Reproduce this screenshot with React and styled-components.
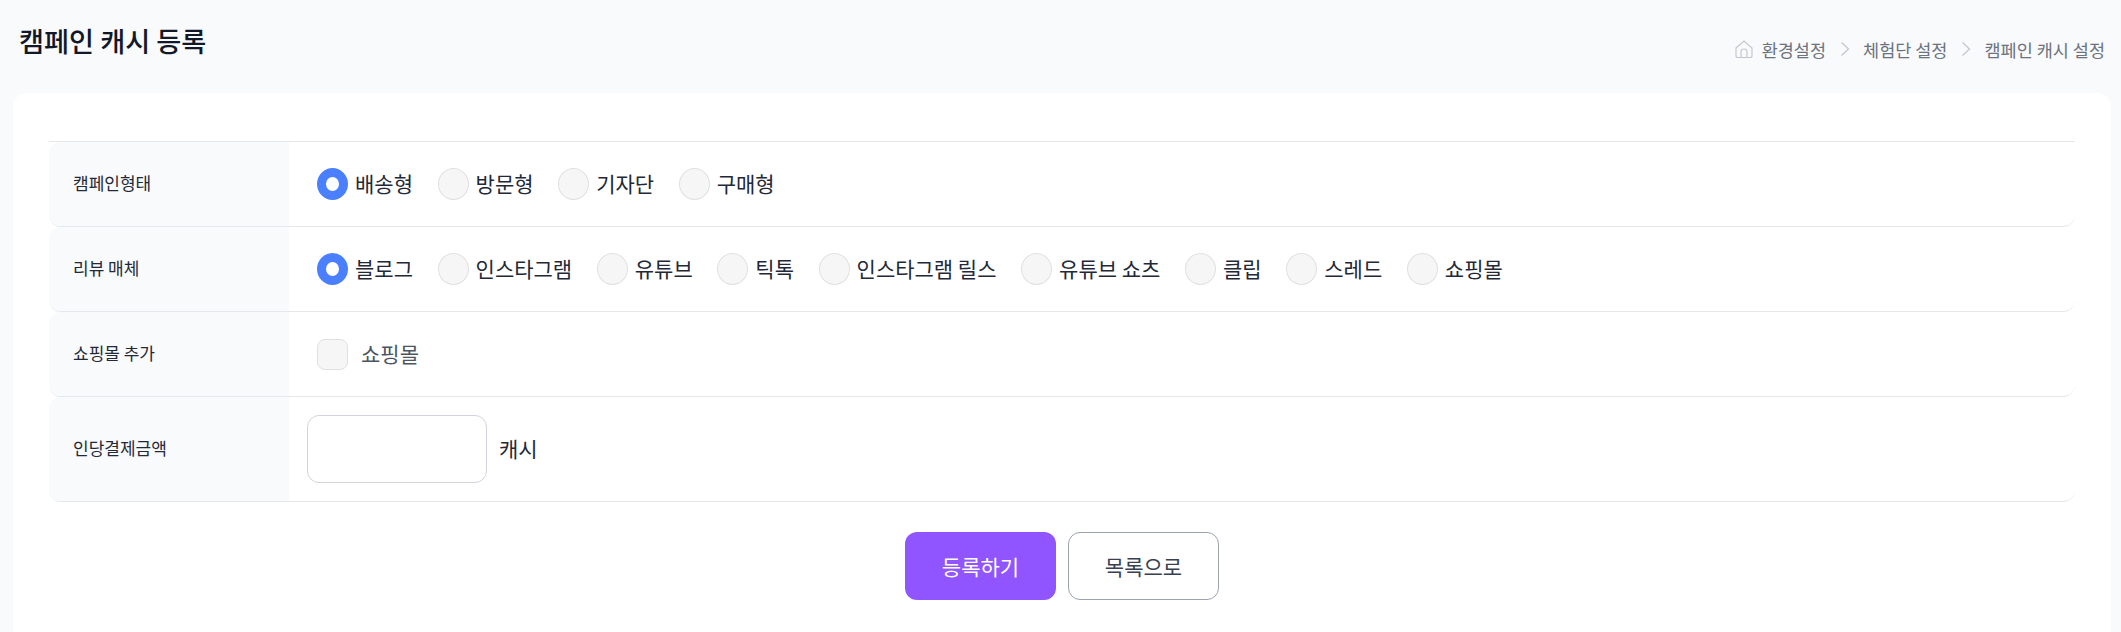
import React from "react";
import styled, { createGlobalStyle } from "styled-components";

const GlobalStyle = createGlobalStyle`
    html, body {
        margin: 0;
        height: 100%;
        overflow: hidden;
        background: #f9fafb;
        font-family: "Noto Sans CJK KR", "Noto Sans", sans-serif;
    }
    * {
        box-sizing: border-box;
    }
`

const Page = styled.div`
    height: 632px;
    display: flex;
    flex-direction: column;
`

const Header = styled.header`
    height: 93px;
    flex: none;
    display: flex;
    justify-content: space-between;
    padding: 0 16px 0 19px;
`

const Title = styled.h1`
    margin: 21px 0 0;
    font-size: 27.2px;
    line-height: 38px;
    font-weight: 500;
    color: #111827;
`

const Breadcrumb = styled.nav`
    display: flex;
    align-items: center;
    height: 24px;
    margin-top: 37px;
    font-size: 17.5px;
    color: #6b7280;
`

const Crumb = styled.span`
    white-space: nowrap;
`

const HomeIcon = styled.svg`
    width: 18px;
    height: 18px;
    margin-right: 9px;
`

const ChevronIcon = styled.svg`
    width: 10px;
    height: 16px;
    margin: 0 13px 0 14px;
`

const Card = styled.main`
    flex: 1;
    margin: 0 10px 0 13px;
    padding: 48px 36px 0;
    background: #fff;
    border-radius: 14px 14px 0 0;
`

const Table = styled.section`
    border-top: 1px solid #e5e7eb;
`

const Row = styled.div`
    display: flex;
    height: ${props => props.$height}px;
    border-bottom: 1px solid #e5e7eb;
    border-radius: 12px;
    overflow: hidden;
`

const RowHead = styled.div`
    width: 240px;
    flex: none;
    display: flex;
    align-items: center;
    padding-bottom: 4px;
    padding-left: 24px;
    background: #f9fafb;
    font-size: 17px;
    color: #1f2937;
`

const RowBody = styled.div`
    flex: 1;
    display: flex;
    align-items: center;
    padding-left: ${props => props.$inset}px;
`

const RadioLabel = styled.label`
    display: flex;
    align-items: center;
    gap: 7px;
    margin-right: 24.6px;
    font-size: 21px;
    line-height: 32px;
    color: #1f2937;
    white-space: nowrap;
`

const OptionText = styled.span`
    padding-bottom: 2px;
`

const Radio = styled.input.attrs({ type: "radio" })`
    appearance: none;
    margin: 0;
    flex: none;
    width: 31px;
    height: 32px;
    border-radius: 50%;
    background: #f6f6f6;
    border: 1px solid #e0e0e0;

    &:checked {
        background: #fff;
        border: 9px solid #4a80ff;
    }
`

const CheckLabel = styled.label`
    display: flex;
    align-items: center;
    gap: 13px;
    font-size: 21px;
    line-height: 32px;
    color: #4b5563;
`

const Check = styled.input.attrs({ type: "checkbox" })`
    appearance: none;
    margin: 0;
    width: 31px;
    height: 31px;
    border-radius: 8px;
    background: #f6f6f6;
    border: 1px solid #e0e0e0;
`

const AmountInput = styled.input`
    width: 180px;
    height: 68px;
    margin-right: 12px;
    border: 1px solid #d1d5db;
    border-radius: 12px;
    background: #fff;
`

const Unit = styled.span`
    font-size: 21px;
    line-height: 32px;
    padding-bottom: 2px;
    color: #1f2937;
`

const Actions = styled.div`
    display: flex;
    justify-content: center;
    gap: 12px;
    margin-top: 30px;
`

const Button = styled.button`
    width: 151px;
    height: 68px;
    border-radius: 12px;
    font-family: inherit;
    font-size: 21px;
    background: ${props => props.$primary ? "#9155ff" : "#fff"};
    color: ${props => props.$primary ? "#fff" : "#374151"};
    border: ${props => props.$primary ? "none" : "1px solid #9ca3af"};
`

const campaignTypes = ["배송형", "방문형", "기자단", "구매형"]
const mediaTypes = ["블로그", "인스타그램", "유튜브", "틱톡", "인스타그램 릴스", "유튜브 쇼츠", "클립", "스레드", "쇼핑몰"]

function RadioGroup ({name, options}) {
    return options.map((option, index) => (
        <RadioLabel key={option}>
            <Radio name={name} defaultChecked={index === 0} />
            <OptionText>{option}</OptionText>
        </RadioLabel>
    ))
}

export default function App () {
    return (
        <Page>
            <GlobalStyle />
            <Header>
                <Title>캠페인 캐시 등록</Title>
                <Breadcrumb>
                    <HomeIcon viewBox="0 0 18 18" fill="none" stroke="#c3c8d0" strokeWidth="1.2">
                        <path d="M1 8 9 1l8 7v8a1.500 1.500 0 0 1-1.500 1.500h-13A1.500 1.500 0 0 1 1 16z" />
                        <path d="M6 17.500V12a3 3 0 0 1 6 0v5.500" />
                    </HomeIcon>
                    <Crumb>환경설정</Crumb>
                    <ChevronIcon viewBox="0 0 10 16" fill="none" stroke="#c3c8d0" strokeWidth="1.3">
                        <path d="m1.500 1.500 7 6.500-7 6.500" />
                    </ChevronIcon>
                    <Crumb>체험단 설정</Crumb>
                    <ChevronIcon viewBox="0 0 10 16" fill="none" stroke="#c3c8d0" strokeWidth="1.3">
                        <path d="m1.500 1.500 7 6.500-7 6.500" />
                    </ChevronIcon>
                    <Crumb>캠페인 캐시 설정</Crumb>
                </Breadcrumb>
            </Header>
            <Card>
                <Table>
                    <Row $height={85}>
                        <RowHead>캠페인형태</RowHead>
                        <RowBody $inset={28}>
                            <RadioGroup name="campaign" options={campaignTypes} />
                        </RowBody>
                    </Row>
                    <Row $height={85}>
                        <RowHead>리뷰 매체</RowHead>
                        <RowBody $inset={28}>
                            <RadioGroup name="media" options={mediaTypes} />
                        </RowBody>
                    </Row>
                    <Row $height={85}>
                        <RowHead>쇼핑몰 추가</RowHead>
                        <RowBody $inset={28}>
                            <CheckLabel>
                                <Check />
                                <OptionText>쇼핑몰</OptionText>
                            </CheckLabel>
                        </RowBody>
                    </Row>
                    <Row $height={105}>
                        <RowHead>인당결제금액</RowHead>
                        <RowBody $inset={18}>
                            <AmountInput />
                            <Unit>캐시</Unit>
                        </RowBody>
                    </Row>
                </Table>
                <Actions>
                    <Button $primary>등록하기</Button>
                    <Button>목록으로</Button>
                </Actions>
            </Card>
        </Page>
    )
}
